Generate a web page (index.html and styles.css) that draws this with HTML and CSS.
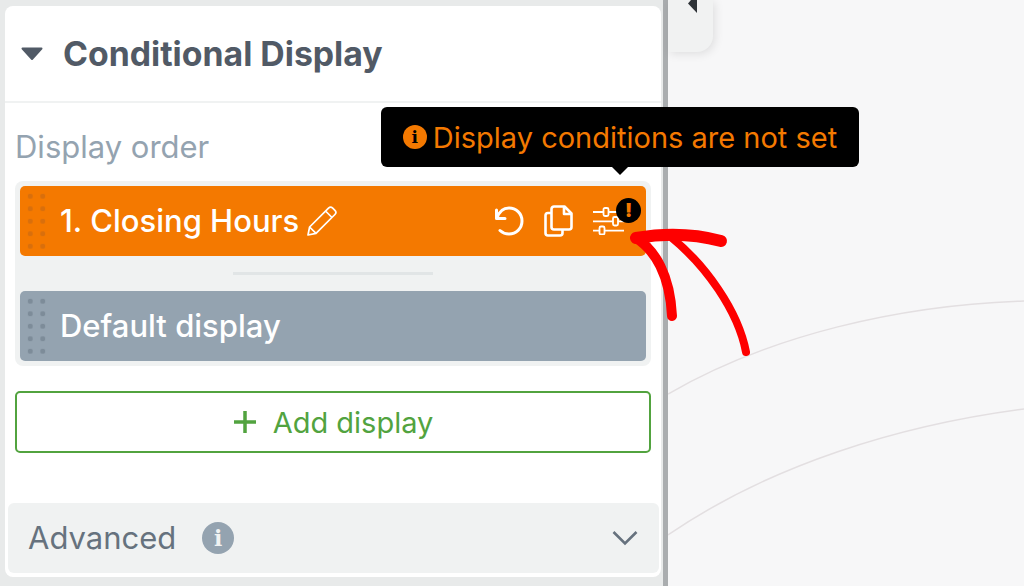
FILE: index.html
```html
<!DOCTYPE html>
<html lang="en">
<head>
  <meta charset="UTF-8">
  <meta name="viewport" content="width=device-width, initial-scale=1.0">
  <title>Conditional Display</title>
  <link rel="stylesheet" href="styles.css">
</head>
<body>
  <div class="sidebar">
    <div class="panel">
      <header class="panel-head">
        <svg class="caret" width="22" height="14" viewBox="0 0 22 14"><path d="M1.5 1.5h19L11 12z" fill="#515a66" stroke="#515a66" stroke-width="2" stroke-linejoin="round"/></svg>
        <h1>Conditional Display</h1>
      </header>
      <div class="panel-body">
        <h2>Display order</h2>
        <div class="display-list">
          <div class="display-row orange">
            <span class="grip"></span>
            <span class="row-title">1. Closing Hours</span>
            <svg class="pencil" width="32" height="32" viewBox="0 0 32 32" fill="none" stroke="#fff" stroke-width="1.700" stroke-linejoin="round"><path d="M2 30l1.600-8L22.500 3.100a3 3 0 0 1 4.200 0l2.200 2.200a3 3 0 0 1 0 4.200L10 28.400zM3.600 22L10 28.400M19.500 6l6.500 6.500"/></svg>
            <div class="row-actions">
              <svg width="32" height="32" viewBox="0 0 32 32" fill="none" stroke="#fff" stroke-width="3" stroke-linecap="round" stroke-linejoin="round"><path d="M4.500 5v8.500H13M5 13C7 7 11.500 3 17 3c7 0 13 5.500 13 13s-6 13-13 13c-3.500 0-6.500-1.200-9-3.500"/></svg>
              <svg width="29" height="32" viewBox="0 0 29 32" fill="none" stroke="#fff" stroke-width="2.600" stroke-linejoin="round"><path d="M10 1.500h10.500l7 7V22a2.500 2.500 0 0 1-2.500 2.500H10A2.500 2.500 0 0 1 7.500 22V4A2.500 2.500 0 0 1 10 1.500zM20 1.500V9h7.500"/><path d="M7.500 8H4a2.500 2.500 0 0 0-2.500 2.500V28A2.500 2.500 0 0 0 4 30.500h12a2.500 2.500 0 0 0 2.500-2.500v-3.500"/></svg>
              <span class="sliders">
                <svg width="31" height="28" viewBox="0 0 31 28" fill="none" stroke="#fff" stroke-width="1.800"><path d="M0 5h31M0 14.300h31M0 23.700h31"/><g fill="#f47900"><rect x="10.500" y="1" width="5" height="8" rx="1.500"/><rect x="20" y="10" width="5" height="8.500" rx="1.500"/><rect x="6.500" y="19.500" width="5" height="8" rx="1.500"/></g></svg>
                <span class="badge">!</span>
              </span>
            </div>
          </div>
          <div class="divider"></div>
          <div class="display-row gray">
            <span class="grip"></span>
            <span class="row-title">Default display</span>
          </div>
        </div>
        <button class="add-btn">
          <svg width="24" height="24" viewBox="0 0 24 24" stroke="#52a33f" stroke-width="3.500"><path d="M12 1v22M1 12h22"/></svg>
          Add display
        </button>
      </div>
      <div class="advanced">
        <span class="adv-label">Advanced</span>
        <span class="info-dot">i</span>
        <svg class="chevron" width="26" height="16" viewBox="0 0 26 16" fill="none" stroke="#66727e" stroke-width="2.600"><path d="M1.500 2L13 13.500 24.500 2"/></svg>
      </div>
    </div>
  </div>
  <div class="splitter"></div>
  <div class="canvas">
    <div class="collapse-tab"><svg width="11" height="14" viewBox="0 0 11 14"><path d="M10 0v13L1 3.500 4 0z" fill="#2f3338"/></svg></div>
    <svg class="links" width="356" height="586" viewBox="668 0 356 586" fill="none" stroke="#e3dfe1" stroke-width="1.500">
      <path d="M668 394C770 335 900 305 1024 301"/>
      <path d="M668 535C770 465 900 425 1024 409"/>
    </svg>
  </div>

  <div class="tooltip">
    <span class="tip-icon">i</span>
    Display conditions are not set
  </div>

  <svg class="red-arrow" width="1024" height="586" viewBox="0 0 1024 586" fill="none" stroke="#fe0000" stroke-linecap="round" stroke-linejoin="round">
    <path d="M636 238C665 233 695 234 721 241" stroke-width="12"/>
    <path d="M636 238C655 250 670 275 672 316" stroke-width="10"/>
    <path d="M672 238C705 265 738 310 746 352" stroke-width="8"/>
  </svg>
</body>
</html>
```

FILE: styles.css
```css
* {
  box-sizing: border-box;
}
html, body {
  height: 586px;
  overflow: hidden;
}
body {
  margin: 0;
  display: flex;
  position: relative;
  background-color: #e8eaea;
  font-family: Inter, "Noto Sans", sans-serif;
  color: #515a66;
}
.sidebar {
  width: 663px;
  padding: 6px 2px 9px 5px;
}
.panel {
  height: 100%;
  display: flex;
  flex-direction: column;
  background-color: #fff;
  border-radius: 8px;
  padding-bottom: 4px;
}
.panel-head {
  height: 97px;
  padding: 0 0 0 16px;
  display: flex;
  align-items: center;
  gap: 20px;
  border-bottom: 2px solid #f0f2f2;
}
.panel-head h1 {
  margin: 0;
  font-size: 33.800px;
  font-weight: 700;
}
.panel-body {
  flex: 1;
  padding: 0 10px;
}
.panel-body h2 {
  margin: 25px 0 16px;
  font-size: 31px;
  line-height: 37px;
  font-weight: 400;
  color: #94a3b0;
}
.display-list {
  height: 185px;
  padding: 5px;
  background-color: #f0f2f2;
  border-radius: 8px;
}
.display-row {
  height: 70px;
  padding-left: 40px;
  display: flex;
  align-items: center;
  position: relative;
  border-radius: 5px;
  color: #fff;
  font-size: 31px;
  font-weight: 500;
}
.display-row.orange {
  background-color: #f47900;
  --dot: #d96f0c;
}
.display-row.gray {
  background-color: #94a3b0;
  --dot: #7d8c99;
}
.grip {
  position: absolute;
  left: 4px;
  top: 4px;
  width: 25px;
  height: 62.500px;
  background-image: radial-gradient(circle, var(--dot) 2.400px, transparent 2.900px);
  background-size: 12.500px 12.500px;
}
.row-title {
  white-space: nowrap;
  margin-bottom: 2px;
}
.pencil {
  margin-left: 7px;
}
.row-actions {
  margin-left: auto;
  padding-right: 22px;
  display: flex;
  align-items: center;
  gap: 20px;
}
.sliders {
  position: relative;
  display: flex;
}
.badge {
  position: absolute;
  top: -9px;
  right: -17px;
  width: 25px;
  height: 25px;
  border-radius: 50%;
  background-color: #000;
  color: #f47900;
  font-size: 19px;
  font-weight: 900;
  line-height: 25px;
  text-align: center;
}
.divider {
  width: 200px;
  height: 3px;
  margin: 16px auto 16px;
  background-color: #e1e5e6;
}
.add-btn {
  width: 636px;
  height: 62px;
  margin-top: 25px;
  display: flex;
  align-items: center;
  justify-content: center;
  gap: 16px;
  background-color: #fff;
  border: 2px solid #52a33f;
  border-radius: 5px;
  color: #52a33f;
  font-family: inherit;
  font-size: 29px;
}
.advanced {
  height: 70px;
  margin: 0 2px 0 3px;
  padding: 0 21px 0 20px;
  display: flex;
  align-items: center;
  background-color: #f0f2f2;
  border-radius: 6px;
  color: #66727e;
  font-size: 31px;
}
.adv-label {
  margin-bottom: 2px;
}
.info-dot {
  width: 32px;
  height: 32px;
  margin-left: 26px;
  border-radius: 50%;
  background-color: #94a3b0;
  color: #f0f2f2;
  font-family: "DejaVu Serif", serif;
  font-size: 22px;
  font-weight: 700;
  line-height: 32px;
  text-align: center;
}
.chevron {
  margin-left: auto;
}
.splitter {
  width: 5px;
  background-color: #aaadaf;
}
.canvas {
  flex: 1;
  position: relative;
  background-color: #f7f7f8;
}
.collapse-tab {
  width: 45px;
  height: 52px;
  padding-left: 19px;
  background-color: #f1f2f2;
  border-bottom-right-radius: 16px;
  box-shadow: 2px 2px 10px rgba(0, 0, 0, 0.1);
}
.collapse-tab svg {
  display: block;
}
.links {
  position: absolute;
  left: 0;
  top: 0;
}
.tooltip {
  position: absolute;
  left: 381px;
  top: 107px;
  width: 478px;
  height: 60px;
  display: flex;
  align-items: center;
  justify-content: center;
  gap: 6px;
  background-color: #000;
  border-radius: 6px;
  color: #f47900;
  font-size: 29px;
}
.tooltip::after {
  content: "";
  position: absolute;
  left: 231px;
  top: 100%;
  border: 8px solid transparent;
  border-top-color: #000;
  border-bottom-width: 0;
}
.tip-icon {
  width: 24px;
  height: 24px;
  border-radius: 50%;
  background-color: #f47900;
  color: #000;
  font-family: "DejaVu Serif", serif;
  font-size: 17px;
  font-weight: 700;
  line-height: 24px;
  text-align: center;
}
.red-arrow {
  position: absolute;
  left: 0;
  top: 0;
  pointer-events: none;
}
```
